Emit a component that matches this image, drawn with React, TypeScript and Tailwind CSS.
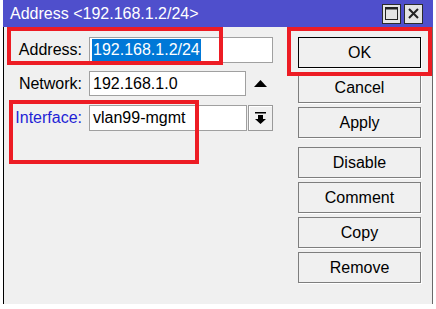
import React from "react";

const font = { fontFamily: '"Liberation Sans", Arial, sans-serif' };

function TitleButton({ kind }: { kind: "max" | "close" }) {
  return (
    <div className="flex h-[20px] w-[19px] items-center justify-center border border-[#2b2b2b] bg-[#e4e4e4]">
      {kind === "max" ? (
        <svg width="13" height="13" viewBox="0 0 13 13">
          <rect x="0.5" y="0.5" width="12" height="12" fill="none" stroke="#222" />
          <rect x="0" y="0" width="13" height="2.5" fill="#222" />
        </svg>
      ) : (
        <svg width="11" height="11" viewBox="0 0 11 11">
          <path d="M1 1 L10 10 M10 1 L1 10" stroke="#222" strokeWidth="2" />
        </svg>
      )}
    </div>
  );
}

function Btn({ label, primary = false, className = "" }: { label: string; primary?: boolean; className?: string }) {
  return (
    <div
      className={`flex h-[31px] w-[123px] items-center justify-center bg-[#f0f0f0] text-[16px] text-black shadow-[1px_1px_0_#ffffff] ${
        primary ? "border border-black" : "border border-[#7e7e7e]"
      } ${className}`}
    >
      {label}
    </div>
  );
}

function Field({
  label,
  labelTone = "text-black",
  children,
  className = "",
}: {
  label: string;
  labelTone?: string;
  children: React.ReactNode;
  className?: string;
}) {
  return (
    <div className={`flex items-center ${className}`}>
      <span className={`w-[78px] text-right text-[16px] ${labelTone}`}>{label}</span>
      <div className="ml-[7px] flex items-center">{children}</div>
    </div>
  );
}

export default function App() {
  return (
    <div className="relative h-[309px] w-[436px] bg-white" style={font}>
      <div className="ml-[3px] w-[430px]">
        <div className="flex h-[27px] items-center bg-[#4f4fcc] pl-[7px] pr-[10px]">
          <span className="text-[16px] leading-none text-white">Address &lt;192.168.1.2/24&gt;</span>
          <div className="ml-auto flex gap-[3px]">
            <TitleButton kind="max" />
            <TitleButton kind="close" />
          </div>
        </div>

        <div className="flex h-[277px] border-l border-r border-l-black border-r-[#6a6a6a] bg-[#f0f0f0]">
          <div className="w-[294px] pt-[10px]">
            <Field label="Address:">
              <div className="flex h-[26px] w-[184px] items-center border border-[#a0a0a0] bg-white px-[2px]">
                <span className="flex h-[22px] items-center bg-[#0078d7] px-[1px] text-[16px] text-white">
                  192.168.1.2/24
                </span>
              </div>
            </Field>
            <Field label="Network:" className="mt-[8px]">
              <div className="flex h-[25px] w-[157px] items-center border border-[#a0a0a0] bg-white px-[3px] text-[16px] text-black">
                192.168.1.0
              </div>
              <svg className="ml-[8px]" width="13" height="7" viewBox="0 0 13 7">
                <path d="M6.5 0 L13 7 L0 7 Z" fill="#000" />
              </svg>
            </Field>
            <Field label="Interface:" labelTone="text-[#1f1fd6]" className="mt-[9px]">
              <div className="flex h-[26px] w-[158px] items-center border border-[#a0a0a0] bg-white px-[3px] text-[16px] text-black">
                vlan99-mgmt
              </div>
              <div className="ml-[1px] flex h-[26px] w-[25px] items-center justify-center border border-[#9a9a9a] bg-[#f0f0f0] shadow-[inset_1px_1px_0_#ffffff]">
                <svg width="11" height="12" viewBox="0 0 11 12">
                  <rect x="0" y="0" width="11" height="1.5" fill="#000" />
                  <path d="M3 3 H8 V7 H11 L5.5 12 L0 7 H3 Z" fill="#000" />
                </svg>
              </div>
            </Field>
          </div>

          <div className="flex flex-col pt-[10px]">
            <Btn label="OK" primary />
            <Btn label="Cancel" className="mt-[4px]" />
            <Btn label="Apply" className="mt-[4px]" />
            <Btn label="Disable" className="mt-[9px]" />
            <Btn label="Comment" className="mt-[4px]" />
            <Btn label="Copy" className="mt-[4px]" />
            <Btn label="Remove" className="mt-[4px]" />
          </div>
        </div>
      </div>

      {/* red annotation frames over the dialog */}
      <div className="absolute left-[7px] top-[27px] h-[38px] w-[216px] border-4 border-[#ed1c24]" />
      <div className="absolute left-[287px] top-[27px] h-[49px] w-[145px] border-4 border-[#ed1c24]" />
      <div className="absolute left-[9px] top-[100px] h-[64px] w-[190px] border-4 border-[#ed1c24]" />
    </div>
  );
}
